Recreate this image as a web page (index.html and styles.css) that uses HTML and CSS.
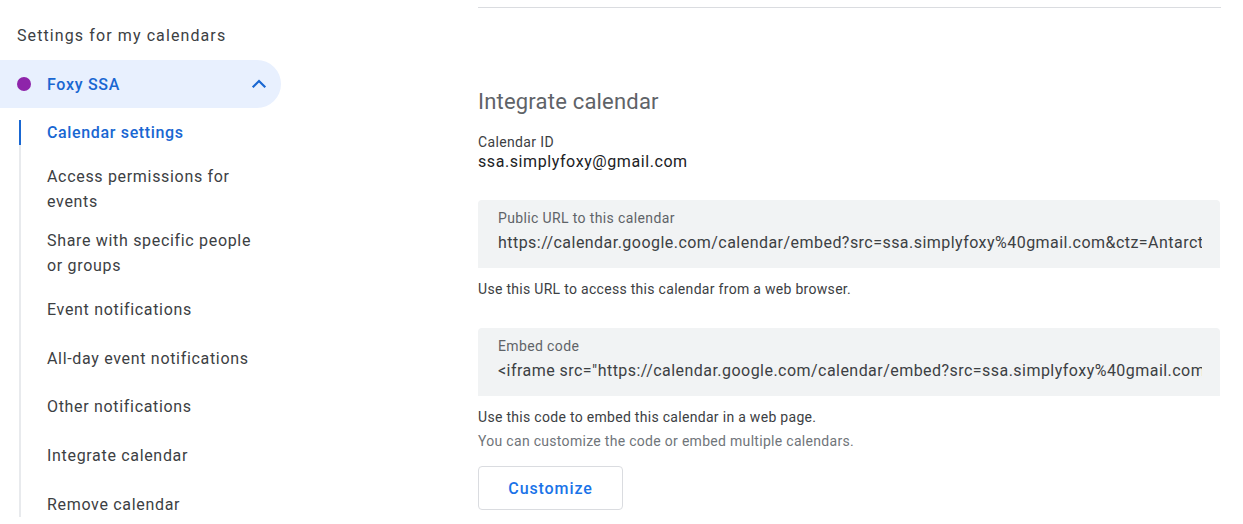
FILE: index.html
```html
<!DOCTYPE html>
<html lang="en">
<head>
<meta charset="utf-8">
<title>Calendar settings</title>
<link rel="stylesheet" href="styles.css">
</head>
<body>
<div class="page">
  <aside class="sidebar">
    <h2 class="side-title">Settings for my calendars</h2>
    <div class="cal-pill">
      <span class="cal-dot"></span>
      <span class="cal-name">Foxy SSA</span>
      <svg class="chev" width="24" height="24" viewBox="0 0 24 24"><path d="M6.5 14.5 L12 9 L17.5 14.5" fill="none" stroke="#1967d2" stroke-width="2.2" stroke-linecap="square"/></svg>
    </div>
    <nav class="subnav">
      <a class="sub-item active">Calendar settings</a>
      <a class="sub-item multi">Access permissions for events</a>
      <a class="sub-item multi">Share with specific people or groups</a>
      <a class="sub-item">Event notifications</a>
      <a class="sub-item">All-day event notifications</a>
      <a class="sub-item">Other notifications</a>
      <a class="sub-item">Integrate calendar</a>
      <a class="sub-item last">Remove calendar</a>
    </nav>
  </aside>
  <main class="content">
    <div class="rule"></div>
    <h1 class="section-title">Integrate calendar</h1>
    <div class="id-label">Calendar ID</div>
    <div class="id-value">ssa.simplyfoxy@gmail.com</div>
    <div class="field">
      <div class="field-label">Public URL to this calendar</div>
      <div class="field-value">https://calendar.google.com/calendar/embed?src=ssa.simplyfoxy%40gmail.com&amp;ctz=Antarctica%2FMcMurdo</div>
    </div>
    <p class="help">Use this URL to access this calendar from a web browser.</p>
    <div class="field second">
      <div class="field-label">Embed code</div>
      <div class="field-value">&lt;iframe src="https://calendar.google.com/calendar/embed?src=ssa.simplyfoxy%40gmail.com&amp;ctz=Antarctica%2FMcMurdo" style="border: 0" width="800" height="600" frameborder="0" scrolling="no"&gt;&lt;/iframe&gt;</div>
    </div>
    <p class="help">Use this code to embed this calendar in a web page.</p>
    <p class="help muted">You can customize the code or embed multiple calendars.</p>
    <button class="btn">Customize</button>
  </main>
</div>
</body>
</html>
```
FILE: styles.css
```css
* { box-sizing: border-box; }
html, body { margin: 0; padding: 0; background: #fff; }
body {
  font-family: Roboto, "Noto Sans", "Liberation Sans", sans-serif;
  color: #3c4043;
  width: 1243px;
  height: 524px;
  overflow: hidden;
}
.page { display: flex; align-items: flex-start; }

.sidebar { width: 281px; flex: none; }
.side-title {
  margin: 24px 0 12px 17px;
  font-size: 16px;
  line-height: 24px;
  font-weight: 400;
  color: #3c4043;
  letter-spacing: 1.1px;
}
.cal-pill {
  height: 48px;
  background: #e8f0fe;
  border-radius: 0 24px 24px 0;
  display: flex;
  align-items: center;
  padding-left: 17px;
  padding-right: 10px;
}
.cal-dot {
  width: 14px; height: 14px; border-radius: 50%;
  background: #8e24aa;
  flex: none;
}
.cal-name {
  margin-left: 16px;
  font-size: 16px;
  font-weight: 500;
  color: #1967d2;
  letter-spacing: 0.7px;
}
.chev { margin-left: auto; display: block; }

.subnav {
  margin: 12px 0 0 19px;
  border-left: 2px solid #e8eaed;
  display: flex;
  flex-direction: column;
}
.sub-item {
  display: block;
  position: relative;
  padding: 11.9px 20px 11.9px 26px;
  font-size: 16px;
  line-height: 25px;
  color: #3c4043;
  letter-spacing: 0.68px;
}
.sub-item.multi { padding-top: 7px; padding-bottom: 7px; }
.sub-item.active {
  padding-top: 0;
  color: #1967d2;
  font-weight: 500;
  letter-spacing: 0.65px;
}
.sub-item.active::before {
  content: "";
  position: absolute;
  left: -2px; top: 0;
  width: 2px; height: 25px;
  background: #1967d2;
}
.sub-item.last { padding-bottom: 0; }

.content {
  margin-left: 197px;
  width: 743px;
  flex: none;
}
.rule { height: 1px; background: #dadce0; margin-top: 7px; }
.section-title {
  margin: 80px 0 0;
  font-size: 22px;
  line-height: 28px;
  font-weight: 400;
  color: #5f6368;
  letter-spacing: 0.2px;
}
.id-label {
  margin-top: 17px;
  font-size: 14px;
  line-height: 19px;
  color: #3c4043;
  letter-spacing: 0.36px;
}
.id-value {
  font-size: 16px;
  line-height: 20px;
  color: #202124;
  letter-spacing: 0.58px;
}
.field {
  margin-top: 28px;
  width: 742px;
  background: #f1f3f4;
  border-radius: 4px 4px 0 0;
  padding: 8px 18px 13px 20px;
}
.field.second { margin-top: 29px; }
.field-label {
  font-size: 14px;
  line-height: 20px;
  color: #5f6368;
  margin-bottom: 3px;
  letter-spacing: 0.37px;
}
.field-value {
  font-size: 16px;
  line-height: 24px;
  color: #3c4043;
  white-space: nowrap;
  overflow: hidden;
  letter-spacing: 0.46px;
}
.help {
  margin: 11px 0 0;
  font-size: 14px;
  line-height: 20px;
  color: #3c4043;
  letter-spacing: 0.3px;
}
.help.muted { margin-top: 4px; color: #70757a; }
.btn {
  margin-top: 15px;
  width: 145px;
  height: 44px;
  background: #fff;
  border: 1px solid #dadce0;
  border-radius: 4px;
  font-family: Roboto, "Noto Sans", sans-serif;
  font-size: 16px;
  font-weight: 500;
  color: #1a73e8;
  letter-spacing: 0.9px;
  padding: 0;
}
```
